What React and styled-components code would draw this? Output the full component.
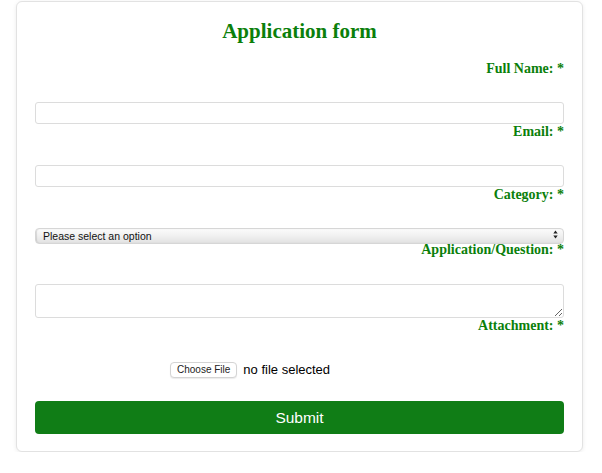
import React from 'react';
import styled, { createGlobalStyle } from 'styled-components';

const GlobalStyle = createGlobalStyle`
  body {
    margin: 0;
    background: #fff;
    font-family: "Liberation Serif", serif;
  }
`;

const Card = styled.form`
  width: 529px;
  margin: 1px 0 0 16px;
  padding: 15px 18px 17px;
  border: 1px solid #e2e2e2;
  border-radius: 6px;
  box-shadow: 0 1px 4px rgba(0, 0, 0, 0.08);
  background: #fff;
`;

const Title = styled.h1`
  margin: 2px 0 17px;
  text-align: center;
  font-family: "Liberation Serif", serif;
  font-size: 21px;
  line-height: 25px;
  font-weight: bold;
  color: #0b7f0b;
`;

const Label = styled.label`
  display: block;
  margin-bottom: ${props => props.gap || 25}px;
  text-align: right;
  font-family: "Liberation Serif", serif;
  font-size: 14px;
  line-height: 16px;
  font-weight: bold;
  color: #0b7f0b;
`;

const TextInput = styled.input`
  display: block;
  box-sizing: border-box;
  width: 100%;
  height: 22px;
  margin: 0;
  border: 1px solid #dcdcdc;
  border-radius: 3px;
  background: #fff;
  outline: none;
`;

const TextArea = styled.textarea`
  display: block;
  box-sizing: border-box;
  width: 100%;
  height: 34px;
  margin: 0;
  border: 1px solid #dcdcdc;
  border-radius: 3px;
  resize: vertical;
  outline: none;
`;

const SelectWrap = styled.div`
  position: relative;
  height: 16px;
`;

const Select = styled.select`
  appearance: none;
  box-sizing: border-box;
  width: 100%;
  height: 16px;
  margin: 0;
  padding: 0 0 0 7px;
  border: 1px solid #d6d6d6;
  border-radius: 4px;
  background: linear-gradient(to bottom, #fbfbfb 0%, #f0f0f0 50%, #e2e2e2 100%);
  box-shadow: inset 1px 0 1px rgba(0, 0, 0, 0.12);
  font-family: "Liberation Sans", Arial, sans-serif;
  font-size: 10.5px;
  color: #111;
  outline: none;
`;

const Arrows = styled.svg`
  position: absolute;
  right: 6px;
  top: 4px;
  pointer-events: none;
`;

const FileRow = styled.div`
  display: flex;
  align-items: center;
  gap: 6px;
  height: 21px;
  padding-left: 135px;
  margin-bottom: 21px;
  font-family: "Liberation Sans", Arial, sans-serif;
`;

const FileButton = styled.label`
  box-sizing: border-box;
  height: 16px;
  padding: 0 6px;
  border: 1px solid #d4d4d4;
  border-radius: 4px;
  background: #fff;
  box-shadow: 0 1px 1px rgba(0, 0, 0, 0.08);
  font-size: 10px;
  line-height: 14px;
  color: #222;
  input {
    display: none;
  }
`;

const FileText = styled.span`
  font-size: 13px;
  color: #000;
`;

const Submit = styled.button`
  display: block;
  width: 100%;
  height: 33px;
  border: none;
  border-radius: 4px;
  background: #107d16;
  color: #fff;
  font-family: "Liberation Sans", Arial, sans-serif;
  font-size: 15.5px;
  cursor: pointer;
`;

export default function App() {
  return (
    <>
      <GlobalStyle />
      <Card onSubmit={e => e.preventDefault()}>
        <Title>Application form</Title>

        <Label htmlFor="name">Full Name: *</Label>
        <TextInput id="name" type="text" />

        <Label htmlFor="email">Email: *</Label>
        <TextInput id="email" type="email" />

        <Label htmlFor="category" gap={23}>Category: *</Label>
        <SelectWrap>
          <Select id="category" defaultValue="">
            <option value="">Please select an option</option>
          </Select>
          <Arrows width="5" height="9" viewBox="0 0 5 9">
            <path d="M2.5 0.5 L4.7 3.6 H0.3 Z" fill="#222" />
            <path d="M2.5 8.5 L4.7 5.4 H0.3 Z" fill="#222" />
          </Arrows>
        </SelectWrap>

        <Label htmlFor="question" gap={26}>Application/Question: *</Label>
        <TextArea id="question" />

        <Label>Attachment: *</Label>
        <FileRow>
          <FileButton>
            Choose File
            <input type="file" />
          </FileButton>
          <FileText>no file selected</FileText>
        </FileRow>

        <Submit type="submit">Submit</Submit>
      </Card>
    </>
  );
}
